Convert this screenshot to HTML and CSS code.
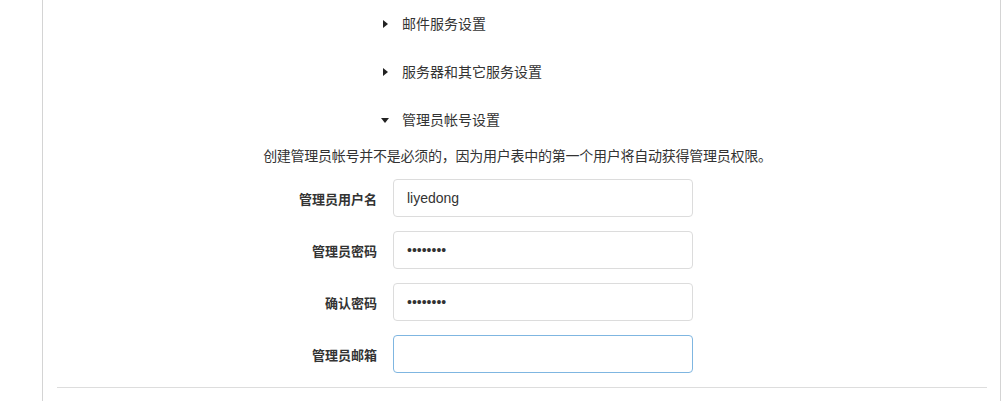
FILE: index.html
```html
<!DOCTYPE html>
<html lang="zh-CN">
<head>
<meta charset="utf-8">
<title>安装设置</title>
<link rel="stylesheet" href="styles.css">
</head>
<body>
<div class="page">
  <div class="section">
    <div class="summary"><span class="tri tri-right"></span><span class="title">邮件服务设置</span></div>
  </div>
  <div class="section">
    <div class="summary"><span class="tri tri-right"></span><span class="title">服务器和其它服务设置</span></div>
  </div>
  <div class="section open">
    <div class="summary"><span class="tri tri-down"></span><span class="title">管理员帐号设置</span></div>
    <p class="desc">创建管理员帐号并不是必须的，因为用户表中的第一个用户将自动获得管理员权限。</p>
    <form class="form">
      <div class="row">
        <label class="label">管理员用户名</label>
        <input class="input" type="text" value="liyedong">
      </div>
      <div class="row">
        <label class="label">管理员密码</label>
        <input class="input" type="password" value="12345678">
      </div>
      <div class="row">
        <label class="label">确认密码</label>
        <input class="input" type="password" value="12345678">
      </div>
      <div class="row">
        <label class="label">管理员邮箱</label>
        <input class="input input-active" type="text" value="">
      </div>
    </form>
  </div>
  <hr class="rule">
  <div class="after"></div>
</div>
</body>
</html>
```

FILE: styles.css
```css
html, body {
  margin: 0;
  padding: 0;
  background: #ffffff;
}
body {
  font-family: "Liberation Sans", "Noto Sans CJK SC", sans-serif;
  color: #333333;
  font-size: 14px;
}
.page {
  margin-left: 42px;
  width: 957px;
  min-height: 401px;
  border-left: 1px solid #d4d4d4;
  border-right: 1px solid #d4d4d4;
  box-sizing: content-box;
}
.summary {
  display: flex;
  align-items: center;
  height: 48px;
  padding-left: 338px;
}
.tri {
  display: inline-block;
  width: 0;
  height: 0;
}
.tri-right {
  border-top: 4px solid transparent;
  border-bottom: 4px solid transparent;
  border-left: 5px solid #222222;
  margin-left: 2px;
  margin-right: 14px;
}
.tri-down {
  border-left: 4px solid transparent;
  border-right: 4px solid transparent;
  border-top: 5px solid #222222;
  margin-right: 13px;
  margin-top: 1px;
}
.title {
  font-size: 14px;
  line-height: 20px;
  color: #333333;
}
.desc {
  margin: 0 0 11px;
  line-height: 24px;
  text-align: center;
  font-size: 14px;
  letter-spacing: -0.25px;
  color: #333333;
  padding-right: 8px;
}
.form {
  margin: 0;
}
.row {
  display: grid;
  grid-template-columns: 334px 300px;
  column-gap: 16px;
  align-items: center;
  margin-bottom: 14px;
}
.label {
  text-align: right;
  font-weight: bold;
  font-size: 13px;
  color: #333333;
}
.input {
  box-sizing: border-box;
  width: 300px;
  height: 38px;
  margin: 0;
  padding: 0 13px;
  border: 1px solid #dcdcdc;
  border-radius: 4px;
  font-family: "Liberation Sans", "Noto Sans CJK SC", sans-serif;
  font-size: 14px;
  color: #333333;
  background: #ffffff;
  outline: none;
}
.input-active {
  border-color: #7fb6e1;
}
.rule {
  margin: 0 13px 0 14px;
  border: 0;
  border-top: 1px solid #dddddd;
  height: 0;
}
```
